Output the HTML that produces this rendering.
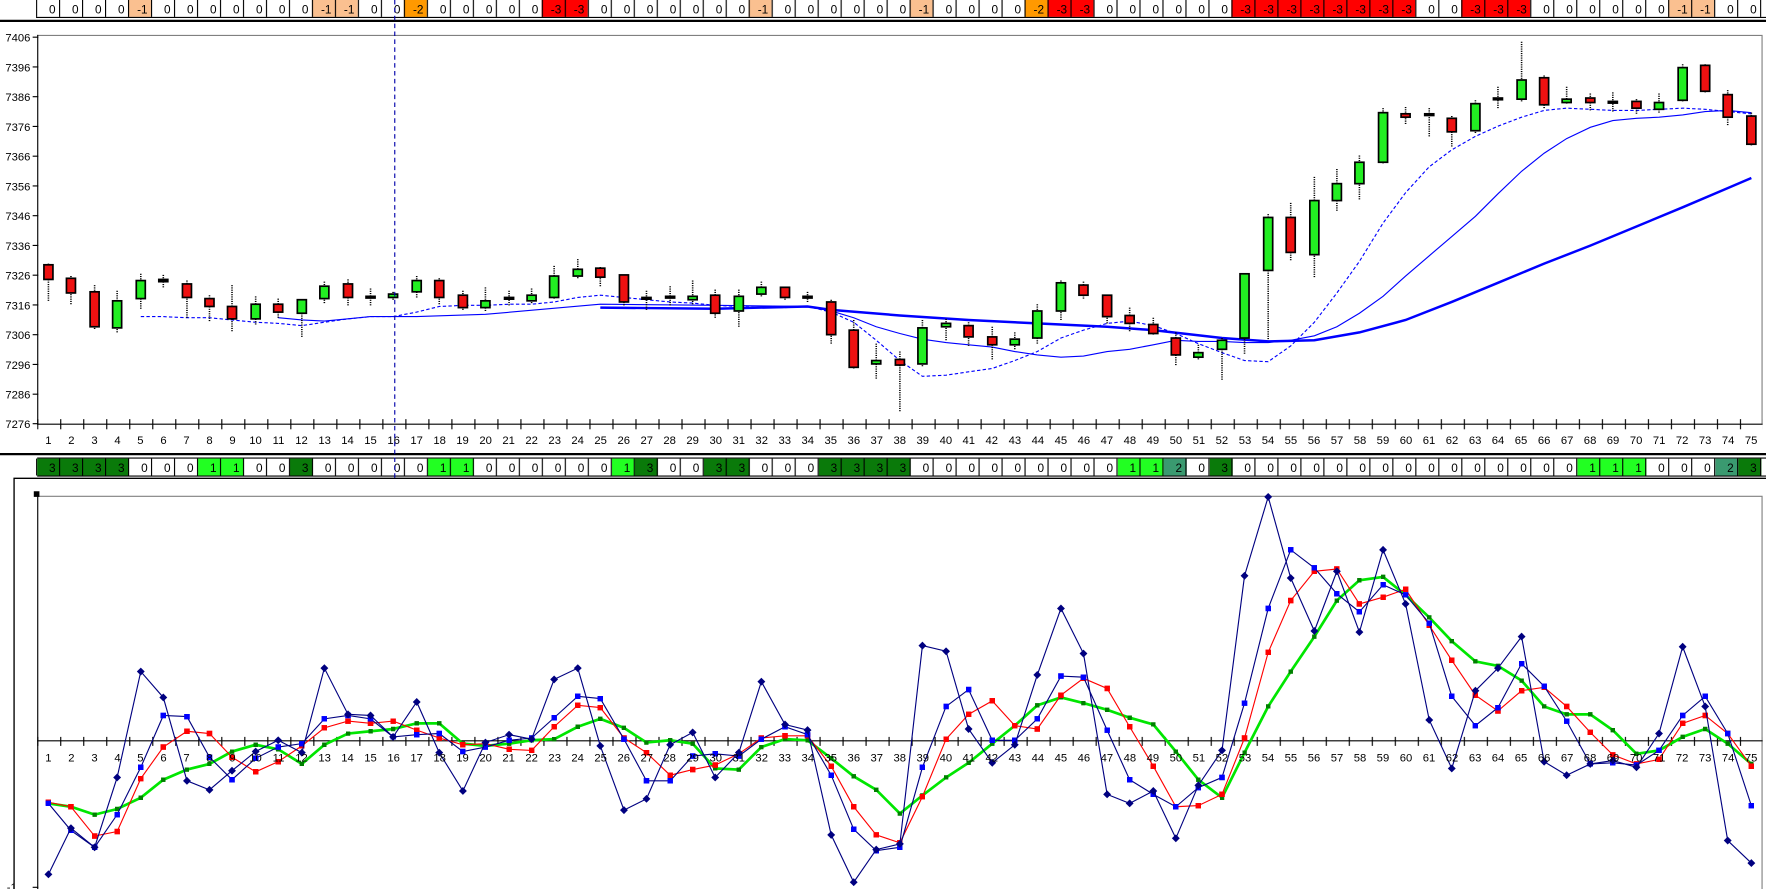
<!DOCTYPE html>
<html><head><meta charset="utf-8"><style>html,body{margin:0;padding:0;background:#fff;overflow:hidden}svg{display:block}</style></head><body>
<svg width="1766" height="889" viewBox="0 0 1568 789" preserveAspectRatio="none" xmlns="http://www.w3.org/2000/svg" font-family="Liberation Sans, Arial, sans-serif">
<defs>
<pattern id="cellp" x="32" y="0" width="20.41" height="800" patternUnits="userSpaceOnUse"><line x1="0.5" y1="0" x2="0.5" y2="800" stroke="#000" stroke-width="1"/></pattern>
<pattern id="tickp" x="33" y="0" width="20.43" height="800" patternUnits="userSpaceOnUse"><line x1="0.5" y1="0" x2="0.5" y2="800" stroke="#000" stroke-width="1"/></pattern>
<marker id="dia" markerWidth="8" markerHeight="8" refX="4" refY="4" markerUnits="userSpaceOnUse"><path d="M4 0.5L7.5 4L4 7.5L0.5 4Z" fill="#000080"/></marker>
<marker id="sqb" markerWidth="5" markerHeight="5" refX="2.5" refY="2.5" markerUnits="userSpaceOnUse"><rect width="5" height="5" fill="#0000ff"/></marker>
<marker id="sqr" markerWidth="5" markerHeight="5" refX="2.5" refY="2.5" markerUnits="userSpaceOnUse"><rect width="5" height="5" fill="#ff0000"/></marker>
<marker id="sqg" markerWidth="4" markerHeight="4" refX="2" refY="2" markerUnits="userSpaceOnUse"><rect width="4" height="4" fill="#008000"/></marker>
</defs>
<rect width="1568" height="789" fill="#fff"/>

<!-- TOP CELL ROW -->
<g>
<rect x="32" y="0" width="1531" height="15" fill="#fff"/>
<g fill="#fac090">
<rect x="113.6" y="0" width="20.4" height="15"/><rect x="276.9" y="0" width="40.8" height="15"/><rect x="664.7" y="0" width="20.4" height="15"/><rect x="807.6" y="0" width="20.4" height="15"/><rect x="1481.1" y="0" width="40.8" height="15"/>
</g>
<g fill="#ff9900"><rect x="358.6" y="0" width="20.4" height="15"/><rect x="909.6" y="0" width="20.4" height="15"/></g>
<g fill="#ff0000"><rect x="481.0" y="0" width="40.8" height="15"/><rect x="930.0" y="0" width="40.8" height="15"/><rect x="1093.3" y="0" width="163.3" height="15"/><rect x="1297.4" y="0" width="61.2" height="15"/></g>
<rect x="32" y="0" width="1532" height="15" fill="url(#cellp)"/>
<line x1="32" y1="15.5" x2="1568" y2="15.5" stroke="#000"/>
<line x1="0" y1="18.5" x2="1568" y2="18.5" stroke="#000" stroke-width="2"/>
<g font-size="10.5" text-anchor="end" fill="#000">
<text x="49.4" y="12">0</text><text x="69.8" y="12">0</text><text x="90.2" y="12">0</text><text x="110.6" y="12">0</text><text x="131.1" y="12">-1</text><text x="151.5" y="12">0</text><text x="171.9" y="12">0</text><text x="192.3" y="12">0</text><text x="212.7" y="12">0</text><text x="233.1" y="12">0</text><text x="253.5" y="12">0</text><text x="273.9" y="12">0</text><text x="294.3" y="12">-1</text><text x="314.7" y="12">-1</text><text x="335.2" y="12">0</text><text x="355.6" y="12">0</text><text x="376.0" y="12">-2</text><text x="396.4" y="12">0</text><text x="416.8" y="12">0</text><text x="437.2" y="12">0</text><text x="457.6" y="12">0</text><text x="478.0" y="12">0</text><text x="498.4" y="12">-3</text><text x="518.8" y="12">-3</text><text x="539.3" y="12">0</text><text x="559.7" y="12">0</text><text x="580.1" y="12">0</text><text x="600.5" y="12">0</text><text x="620.9" y="12">0</text><text x="641.3" y="12">0</text><text x="661.7" y="12">0</text><text x="682.1" y="12">-1</text><text x="702.5" y="12">0</text><text x="722.9" y="12">0</text><text x="743.4" y="12">0</text><text x="763.8" y="12">0</text><text x="784.2" y="12">0</text><text x="804.6" y="12">0</text><text x="825.0" y="12">-1</text><text x="845.4" y="12">0</text><text x="865.8" y="12">0</text><text x="886.2" y="12">0</text><text x="906.6" y="12">0</text><text x="927.0" y="12">-2</text><text x="947.5" y="12">-3</text><text x="967.9" y="12">-3</text><text x="988.3" y="12">0</text><text x="1008.7" y="12">0</text><text x="1029.1" y="12">0</text><text x="1049.5" y="12">0</text><text x="1069.9" y="12">0</text><text x="1090.3" y="12">0</text><text x="1110.7" y="12">-3</text><text x="1131.1" y="12">-3</text><text x="1151.6" y="12">-3</text><text x="1172.0" y="12">-3</text><text x="1192.4" y="12">-3</text><text x="1212.8" y="12">-3</text><text x="1233.2" y="12">-3</text><text x="1253.6" y="12">-3</text><text x="1274.0" y="12">0</text><text x="1294.4" y="12">0</text><text x="1314.8" y="12">-3</text><text x="1335.2" y="12">-3</text><text x="1355.7" y="12">-3</text><text x="1376.1" y="12">0</text><text x="1396.5" y="12">0</text><text x="1416.9" y="12">0</text><text x="1437.3" y="12">0</text><text x="1457.7" y="12">0</text><text x="1478.1" y="12">0</text><text x="1498.5" y="12">-1</text><text x="1518.9" y="12">-1</text><text x="1539.3" y="12">0</text><text x="1559.8" y="12">0</text>
</g>
</g>

<!-- TOP CHART -->
<line x1="33" y1="31.5" x2="1564" y2="31.5" stroke="#808080"/>
<line x1="1564.5" y1="31" x2="1564.5" y2="376" stroke="#808080"/>
<line x1="33.5" y1="31" x2="33.5" y2="377" stroke="#000"/>
<line x1="33" y1="376.5" x2="1565" y2="376.5" stroke="#000"/>
<rect x="33" y="372" width="1532" height="9" fill="url(#tickp)"/>
<path d="M29 33H34M29 59.4H34M29 85.8H34M29 112.2H34M29 138.6H34M29 165H34M29 191.4H34M29 217.8H34M29 244.2H34M29 270.6H34M29 297H34M29 323.4H34M29 349.8H34M29 376H34" stroke="#000"/>
<g font-size="10" text-anchor="end" fill="#000">
<text x="27" y="37">7406</text><text x="27" y="63.4">7396</text><text x="27" y="89.8">7386</text><text x="27" y="116.2">7376</text><text x="27" y="142.6">7366</text><text x="27" y="169">7356</text><text x="27" y="195.4">7346</text><text x="27" y="221.8">7336</text><text x="27" y="248.2">7326</text><text x="27" y="274.6">7316</text><text x="27" y="301">7306</text><text x="27" y="327.4">7296</text><text x="27" y="353.8">7286</text><text x="27" y="380">7276</text>
</g>
<g font-size="10" text-anchor="middle" fill="#000">
<text x="43" y="394">1</text><text x="63.4" y="394">2</text><text x="83.9" y="394">3</text><text x="104.3" y="394">4</text><text x="124.7" y="394">5</text><text x="145.2" y="394">6</text><text x="165.6" y="394">7</text><text x="186" y="394">8</text><text x="206.4" y="394">9</text><text x="226.9" y="394">10</text><text x="247.3" y="394">11</text><text x="267.7" y="394">12</text><text x="288.2" y="394">13</text><text x="308.6" y="394">14</text><text x="329" y="394">15</text><text x="349.5" y="394">16</text><text x="369.9" y="394">17</text><text x="390.3" y="394">18</text><text x="410.7" y="394">19</text><text x="431.2" y="394">20</text><text x="451.6" y="394">21</text><text x="472" y="394">22</text><text x="492.5" y="394">23</text><text x="512.9" y="394">24</text><text x="533.3" y="394">25</text><text x="553.8" y="394">26</text><text x="574.2" y="394">27</text><text x="594.6" y="394">28</text><text x="615" y="394">29</text><text x="635.5" y="394">30</text><text x="655.9" y="394">31</text><text x="676.3" y="394">32</text><text x="696.8" y="394">33</text><text x="717.2" y="394">34</text><text x="737.6" y="394">35</text><text x="758.1" y="394">36</text><text x="778.5" y="394">37</text><text x="798.9" y="394">38</text><text x="819.3" y="394">39</text><text x="839.8" y="394">40</text><text x="860.2" y="394">41</text><text x="880.6" y="394">42</text><text x="901.1" y="394">43</text><text x="921.5" y="394">44</text><text x="941.9" y="394">45</text><text x="962.4" y="394">46</text><text x="982.8" y="394">47</text><text x="1003.2" y="394">48</text><text x="1023.6" y="394">49</text><text x="1044.1" y="394">50</text><text x="1064.5" y="394">51</text><text x="1084.9" y="394">52</text><text x="1105.4" y="394">53</text><text x="1125.8" y="394">54</text><text x="1146.2" y="394">55</text><text x="1166.7" y="394">56</text><text x="1187.1" y="394">57</text><text x="1207.5" y="394">58</text><text x="1227.9" y="394">59</text><text x="1248.4" y="394">60</text><text x="1268.8" y="394">61</text><text x="1289.2" y="394">62</text><text x="1309.7" y="394">63</text><text x="1330.1" y="394">64</text><text x="1350.5" y="394">65</text><text x="1371" y="394">66</text><text x="1391.4" y="394">67</text><text x="1411.8" y="394">68</text><text x="1432.2" y="394">69</text><text x="1452.7" y="394">70</text><text x="1473.1" y="394">71</text><text x="1493.5" y="394">72</text><text x="1514" y="394">73</text><text x="1534.4" y="394">74</text><text x="1554.8" y="394">75</text>
</g>

<!-- moving averages -->
<polyline fill="none" stroke="#0000ff" stroke-width="2.2" points="533,273 635,274 717,272 738,275 799,280 860,284 921,287 983,290 1024,293 1085,300 1126,303 1167,302 1207,295 1248,284 1289,268 1330,251 1371,234 1412,218 1453,201 1494,184 1534,167 1555,158"/>
<polyline fill="none" stroke="#0000ff" stroke-width="1" points="247,282 268,284 288,285 309,283 329,281 349,281 370,281 431,279 533,270 635,271 717,272 738,276 758,282 778,290 799,296 819,301 840,304 860,306 881,308 901,312 921,315 942,317 962,316 983,312 1003,310 1024,306 1044,302 1064,303 1085,303 1105,304 1126,304 1146,302 1167,298 1187,290 1207,278 1228,263 1248,245 1269,227 1289,210 1310,192 1330,172 1351,152 1371,136 1391,123 1412,113 1432,107 1453,105 1473,104 1494,102 1514,99 1534,98 1555,100"/>
<polyline fill="none" stroke="#0000ff" stroke-width="1" stroke-dasharray="3,2" points="125,281 145,281 166,282 186,282 206,284 227,286 247,287 268,289 288,286 309,283 329,281 349,281 370,277 390,272 411,271 431,271 452,270 472,270 492,268 513,264 533,262 554,264 574,266 595,268 615,269 635,271 656,272 676,273 697,273 717,272 738,277 758,286 778,302 799,320 819,334 840,333 860,330 881,327 901,320 921,312 942,300 962,293 983,287 1003,285 1024,289 1044,296 1064,305 1085,313 1105,320 1126,321 1146,307 1167,286 1187,260 1207,232 1228,198 1248,171 1269,148 1289,133 1310,121 1330,112 1351,104 1371,98 1391,96 1412,97 1432,98 1453,98 1473,97 1494,96 1514,97 1534,99 1555,101"/>

<!-- wicks -->
<path fill="none" stroke="#000" stroke-width="1.4" stroke-dasharray="1,1" d="M43 234V268M63 245V270M84 253V292M104 258V295M125 243V275M145 244V255M166 249V283M186 262V285M206 253V294M227 263V289M247 265V282M268 266V300M288 250V270M309 248V272M329 256V272M349 259V266M370 245V265M390 247V270M411 258V276M431 255V276M452 258V271M472 256V269M492 236V266M513 230V248M533 237V255M554 244V272M574 258V276M595 254V272M615 249V271M635 257V282M656 257V291M676 250V263M697 255V267M717 259V268M738 266V306M758 284V328M778 305V337M799 312V366M819 284V325M840 283V302M860 286V307M881 290V319M901 295V311M921 270V305M942 249V284M962 250V265M983 262V287M1003 273V295M1024 282V298M1044 295V324M1064 306V319M1085 300V338M1105 243V315M1126 190V302M1146 180V232M1167 157V247M1187 150V188M1207 138V178M1228 96V146M1248 95V110M1269 96V121M1289 103V131M1310 89V119M1330 77V97M1351 37V90M1371 67V96M1391 77V92M1412 83V99M1432 82V100M1453 88V101M1473 83V100M1494 57V91M1514 57V83M1534 80V111M1555 100V129"/>
<!-- bodies -->
<g stroke="#000" stroke-width="1.5">
<g fill="#ee1111">
<rect x="39" y="235" width="8" height="13"/><rect x="59" y="247" width="8" height="13"/><rect x="80" y="259" width="8" height="31"/><rect x="162" y="252" width="8" height="12"/><rect x="182" y="265" width="8" height="7"/><rect x="202" y="272" width="8" height="11"/><rect x="243" y="270" width="8" height="7"/><rect x="305" y="252" width="8" height="12"/><rect x="386" y="249" width="8" height="15"/><rect x="407" y="262" width="8" height="11"/><rect x="529" y="238" width="8" height="8"/><rect x="550" y="244" width="8" height="24"/><rect x="631" y="262" width="8" height="16"/><rect x="693" y="255" width="8" height="9"/><rect x="734" y="268" width="8" height="29"/><rect x="754" y="293" width="8" height="33"/><rect x="795" y="319" width="8" height="5"/><rect x="856" y="289" width="8" height="10"/><rect x="877" y="299" width="8" height="7"/><rect x="958" y="253" width="8" height="9"/><rect x="979" y="262" width="8" height="19"/><rect x="999" y="280" width="8" height="7"/><rect x="1020" y="288" width="8" height="8"/><rect x="1040" y="300" width="8" height="15"/><rect x="1142" y="193" width="8" height="31"/><rect x="1244" y="101" width="8" height="3"/><rect x="1285" y="105" width="8" height="12"/><rect x="1367" y="69" width="8" height="24"/><rect x="1408" y="87" width="8" height="4"/><rect x="1449" y="90" width="8" height="6"/><rect x="1510" y="58" width="8" height="23"/><rect x="1530" y="84" width="8" height="20"/><rect x="1551" y="103" width="8" height="25"/>
</g>
<g fill="#22ee22">
<rect x="100" y="267" width="8" height="24"/><rect x="121" y="249" width="8" height="16"/><rect x="223" y="270" width="8" height="13"/><rect x="264" y="266" width="8" height="12"/><rect x="284" y="254" width="8" height="11"/><rect x="345" y="261" width="8" height="3"/><rect x="366" y="249" width="8" height="10"/><rect x="427" y="267" width="8" height="6"/><rect x="468" y="262" width="8" height="5"/><rect x="488" y="245" width="8" height="19"/><rect x="509" y="239" width="8" height="6"/><rect x="611" y="263" width="8" height="3"/><rect x="652" y="263" width="8" height="13"/><rect x="672" y="255" width="8" height="6"/><rect x="774" y="320" width="8" height="3"/><rect x="815" y="291" width="8" height="32"/><rect x="836" y="287" width="8" height="3"/><rect x="897" y="301" width="8" height="5"/><rect x="917" y="276" width="8" height="24"/><rect x="938" y="251" width="8" height="25"/><rect x="1060" y="313" width="8" height="4"/><rect x="1081" y="302" width="8" height="8"/><rect x="1101" y="243" width="8" height="57"/><rect x="1122" y="193" width="8" height="47"/><rect x="1163" y="178" width="8" height="48"/><rect x="1183" y="163" width="8" height="15"/><rect x="1203" y="144" width="8" height="19"/><rect x="1224" y="100" width="8" height="44"/><rect x="1306" y="92" width="8" height="24"/><rect x="1347" y="71" width="8" height="17"/><rect x="1387" y="88" width="8" height="3"/><rect x="1469" y="91" width="8" height="6"/><rect x="1490" y="60" width="8" height="29"/>
</g>
<g fill="#000">
<rect x="141" y="248" width="8" height="2"/><rect x="325" y="263" width="8" height="1.5"/><rect x="448" y="264" width="8" height="1.5"/><rect x="570" y="264" width="8" height="1.5"/><rect x="591" y="263" width="8" height="1.5"/><rect x="713" y="263" width="8" height="1.5"/><rect x="1265" y="101" width="8" height="1.5"/><rect x="1326" y="87" width="8" height="1.5"/><rect x="1428" y="90" width="8" height="1.5"/>
</g>
</g>

<!-- middle separator & bottom cell row -->
<line x1="0" y1="403" x2="1568" y2="403" stroke="#000" stroke-width="2"/>
<line x1="33" y1="406.5" x2="1568" y2="406.5" stroke="#000"/>
<g>
<g fill="#0a7a0a">
<rect x="33" y="407" width="81.6" height="15"/><rect x="257.5" y="407" width="20.4" height="15"/><rect x="563.7" y="407" width="20.4" height="15"/><rect x="624.9" y="407" width="40.8" height="15"/><rect x="727" y="407" width="81.6" height="15"/><rect x="1074.1" y="407" width="20.4" height="15"/><rect x="1543.5" y="407" width="20.4" height="15"/>
</g>
<g fill="#22ff22">
<rect x="175.9" y="407" width="40.8" height="15"/><rect x="380.0" y="407" width="40.8" height="15"/><rect x="543.3" y="407" width="20.4" height="15"/><rect x="992.5" y="407" width="40.8" height="15"/><rect x="1400.6" y="407" width="61.2" height="15"/>
</g>
<g fill="#3a9a70"><rect x="1033.3" y="407" width="20.4" height="15"/><rect x="1523.1" y="407" width="20.4" height="15"/></g>
<rect x="32" y="407" width="1532" height="15" fill="url(#cellp)"/>
<line x1="33" y1="422.5" x2="1568" y2="422.5" stroke="#000"/>
<g font-size="10.5" text-anchor="end" fill="#000">
<text x="49.4" y="419">3</text><text x="69.8" y="419">3</text><text x="90.2" y="419">3</text><text x="110.6" y="419">3</text><text x="131.1" y="419">0</text><text x="151.5" y="419">0</text><text x="171.9" y="419">0</text><text x="192.3" y="419">1</text><text x="212.7" y="419">1</text><text x="233.1" y="419">0</text><text x="253.5" y="419">0</text><text x="273.9" y="419">3</text><text x="294.3" y="419">0</text><text x="314.7" y="419">0</text><text x="335.2" y="419">0</text><text x="355.6" y="419">0</text><text x="376.0" y="419">0</text><text x="396.4" y="419">1</text><text x="416.8" y="419">1</text><text x="437.2" y="419">0</text><text x="457.6" y="419">0</text><text x="478.0" y="419">0</text><text x="498.4" y="419">0</text><text x="518.8" y="419">0</text><text x="539.3" y="419">0</text><text x="559.7" y="419">1</text><text x="580.1" y="419">3</text><text x="600.5" y="419">0</text><text x="620.9" y="419">0</text><text x="641.3" y="419">3</text><text x="661.7" y="419">3</text><text x="682.1" y="419">0</text><text x="702.5" y="419">0</text><text x="722.9" y="419">0</text><text x="743.4" y="419">3</text><text x="763.8" y="419">3</text><text x="784.2" y="419">3</text><text x="804.6" y="419">3</text><text x="825.0" y="419">0</text><text x="845.4" y="419">0</text><text x="865.8" y="419">0</text><text x="886.2" y="419">0</text><text x="906.6" y="419">0</text><text x="927.0" y="419">0</text><text x="947.5" y="419">0</text><text x="967.9" y="419">0</text><text x="988.3" y="419">0</text><text x="1008.7" y="419">1</text><text x="1029.1" y="419">1</text><text x="1049.5" y="419">2</text><text x="1069.9" y="419">0</text><text x="1090.3" y="419">3</text><text x="1110.7" y="419">0</text><text x="1131.1" y="419">0</text><text x="1151.6" y="419">0</text><text x="1172.0" y="419">0</text><text x="1192.4" y="419">0</text><text x="1212.8" y="419">0</text><text x="1233.2" y="419">0</text><text x="1253.6" y="419">0</text><text x="1274.0" y="419">0</text><text x="1294.4" y="419">0</text><text x="1314.8" y="419">0</text><text x="1335.2" y="419">0</text><text x="1355.7" y="419">0</text><text x="1376.1" y="419">0</text><text x="1396.5" y="419">0</text><text x="1416.9" y="419">1</text><text x="1437.3" y="419">1</text><text x="1457.7" y="419">1</text><text x="1478.1" y="419">0</text><text x="1498.5" y="419">0</text><text x="1518.9" y="419">0</text><text x="1539.3" y="419">2</text><text x="1559.8" y="419">3</text>
</g>
</g>

<!-- BOTTOM CHART -->
<path d="M12.5 789V424.5H1568" fill="none" stroke="#000" stroke-width="1.2"/>
<line x1="33" y1="440.5" x2="1564" y2="440.5" stroke="#808080"/>
<line x1="1564.5" y1="440" x2="1564.5" y2="789" stroke="#808080"/>
<line x1="33.5" y1="437" x2="33.5" y2="789" stroke="#000"/>
<rect x="30" y="436" width="5" height="5" fill="#000"/>
<line x1="29" y1="787.5" x2="34" y2="787.5" stroke="#000"/>
<text x="6" y="791" font-size="10">-1</text>
<line x1="33" y1="657.5" x2="1565" y2="657.5" stroke="#000"/>
<rect x="33" y="654" width="1532" height="8" fill="url(#tickp)"/>

<polyline fill="none" stroke="#00e600" stroke-width="2.4" marker-start="url(#sqg)" marker-mid="url(#sqg)" marker-end="url(#sqg)" points="43,713 63,716 84,723 104,718 125,708 145,692 166,683 186,678 206,667 227,661 247,665 268,678 288,661 309,651 329,649 349,647 370,642 390,642 411,660 431,662 452,660 472,657 492,656 513,645 533,638 554,646 574,659 595,657 615,660 635,682 656,683 676,663 697,656 717,657 738,673 758,689 778,701 799,722 819,706 840,690 860,677 881,660 901,644 921,626 942,619 962,624 983,630 1003,637 1024,643 1044,667 1064,692 1085,708 1105,668 1126,627 1146,596 1167,565 1187,533 1207,515 1228,512 1248,528 1269,548 1289,569 1310,587 1330,591 1351,604 1371,627 1391,634 1412,634 1432,648 1453,669 1473,666 1494,654 1514,647 1534,660 1555,678"/>
<polyline fill="none" stroke="#ff0000" stroke-width="1" marker-start="url(#sqr)" marker-mid="url(#sqr)" marker-end="url(#sqr)" points="43,712 63,716 84,742 104,738 125,691 145,663 166,649 186,651 206,672 227,685 247,676 268,662 288,646 309,640 329,642 349,640 370,648 390,655 411,661 431,660 452,665 472,666 492,645 513,626 533,628 554,655 574,668 595,688 615,683 635,679 656,669 676,655 697,653 717,653 738,680 758,716 778,741 799,748 819,707 840,656 860,634 881,622 901,644 921,647 942,617 962,602 983,611 1003,645 1024,680 1044,716 1064,715 1085,705 1105,655 1126,579 1146,533 1167,507 1187,505 1207,536 1228,530 1248,523 1269,555 1289,586 1310,617 1330,631 1351,613 1371,610 1391,627 1412,650 1432,670 1453,678 1473,674 1494,642 1514,635 1534,651 1555,680"/>
<polyline fill="none" stroke="#000080" stroke-width="1" marker-start="url(#sqb)" marker-mid="url(#sqb)" marker-end="url(#sqb)" points="43,713 63,737 84,752 104,723 125,681 145,635 166,636 186,672 206,692 227,673 247,663 268,660 288,638 309,635 329,638 349,654 370,652 390,651 411,667 431,663 452,657 472,655 492,637 513,618 533,620 554,656 574,693 595,693 615,671 635,669 656,671 676,656 697,645 717,652 738,688 758,736 778,755 799,752 819,681 840,627 860,612 881,657 901,657 921,638 942,600 962,601 983,648 1003,692 1024,705 1044,716 1064,699 1085,690 1105,624 1126,540 1146,488 1167,504 1187,527 1207,543 1228,519 1248,528 1269,553 1289,618 1310,644 1330,628 1351,589 1371,609 1391,640 1412,678 1432,677 1453,679 1473,666 1494,635 1514,618 1534,651 1555,715"/>
<polyline fill="none" stroke="#000080" stroke-width="1" marker-start="url(#dia)" marker-mid="url(#dia)" marker-end="url(#dia)" points="43,776 63,735 84,752 104,690 125,596 145,619 166,693 186,701 206,684 227,667 247,657 268,668 288,593 309,634 329,635 349,654 370,623 390,668 411,702 431,659 452,652 472,656 492,603 513,593 533,662 554,719 574,709 595,661 615,650 635,690 656,668 676,605 697,643 717,648 738,741 758,783 778,754 799,749 819,573 840,578 860,647 881,677 901,661 921,599 942,540 962,580 983,705 1003,713 1024,702 1044,744 1064,697 1085,666 1105,511 1126,441 1146,513 1167,560 1187,507 1207,561 1228,488 1248,536 1269,639 1289,682 1310,613 1330,593 1351,565 1371,676 1391,688 1412,678 1432,675 1453,681 1473,651 1494,574 1514,627 1534,746 1555,766"/>

<g font-size="10" text-anchor="middle" fill="#000">
<text x="43" y="676">1</text><text x="63.4" y="676">2</text><text x="83.9" y="676">3</text><text x="104.3" y="676">4</text><text x="124.7" y="676">5</text><text x="145.2" y="676">6</text><text x="165.6" y="676">7</text><text x="186" y="676">8</text><text x="206.4" y="676">9</text><text x="226.9" y="676">10</text><text x="247.3" y="676">11</text><text x="267.7" y="676">12</text><text x="288.2" y="676">13</text><text x="308.6" y="676">14</text><text x="329" y="676">15</text><text x="349.5" y="676">16</text><text x="369.9" y="676">17</text><text x="390.3" y="676">18</text><text x="410.7" y="676">19</text><text x="431.2" y="676">20</text><text x="451.6" y="676">21</text><text x="472" y="676">22</text><text x="492.5" y="676">23</text><text x="512.9" y="676">24</text><text x="533.3" y="676">25</text><text x="553.8" y="676">26</text><text x="574.2" y="676">27</text><text x="594.6" y="676">28</text><text x="615" y="676">29</text><text x="635.5" y="676">30</text><text x="655.9" y="676">31</text><text x="676.3" y="676">32</text><text x="696.8" y="676">33</text><text x="717.2" y="676">34</text><text x="737.6" y="676">35</text><text x="758.1" y="676">36</text><text x="778.5" y="676">37</text><text x="798.9" y="676">38</text><text x="819.3" y="676">39</text><text x="839.8" y="676">40</text><text x="860.2" y="676">41</text><text x="880.6" y="676">42</text><text x="901.1" y="676">43</text><text x="921.5" y="676">44</text><text x="941.9" y="676">45</text><text x="962.4" y="676">46</text><text x="982.8" y="676">47</text><text x="1003.2" y="676">48</text><text x="1023.6" y="676">49</text><text x="1044.1" y="676">50</text><text x="1064.5" y="676">51</text><text x="1084.9" y="676">52</text><text x="1105.4" y="676">53</text><text x="1125.8" y="676">54</text><text x="1146.2" y="676">55</text><text x="1166.7" y="676">56</text><text x="1187.1" y="676">57</text><text x="1207.5" y="676">58</text><text x="1227.9" y="676">59</text><text x="1248.4" y="676">60</text><text x="1268.8" y="676">61</text><text x="1289.2" y="676">62</text><text x="1309.7" y="676">63</text><text x="1330.1" y="676">64</text><text x="1350.5" y="676">65</text><text x="1371" y="676">66</text><text x="1391.4" y="676">67</text><text x="1411.8" y="676">68</text><text x="1432.2" y="676">69</text><text x="1452.7" y="676">70</text><text x="1473.1" y="676">71</text><text x="1493.5" y="676">72</text><text x="1514" y="676">73</text><text x="1534.4" y="676">74</text><text x="1554.8" y="676">75</text>
</g>

<!-- dashed vertical cursor -->
<line x1="350.5" y1="0" x2="350.5" y2="424" stroke="#0000aa" stroke-width="1" stroke-dasharray="4,3"/>
</svg>
</body></html>
